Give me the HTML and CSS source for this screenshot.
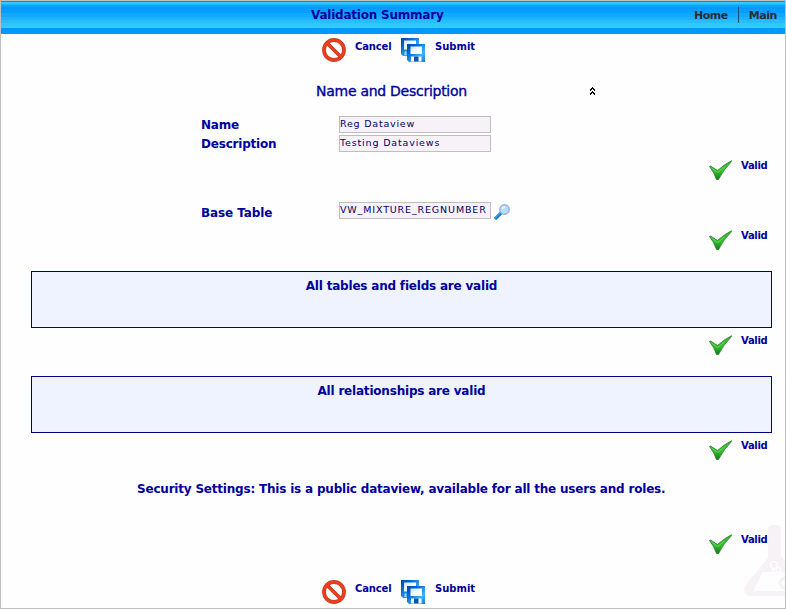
FILE: index.html
```
<!DOCTYPE html>
<html lang="en">
<head>
<meta charset="utf-8">
<title>Validation Summary</title>
<link rel="stylesheet" href="styles.css">
</head>
<body>
<svg width="0" height="0" class="defs" aria-hidden="true">
  <defs>
    <linearGradient id="disk" x1="0" y1="0" x2="1" y2="1"><stop offset="0" stop-color="#0a3fa4"/><stop offset=".35" stop-color="#0d6fd0"/><stop offset=".7" stop-color="#3fb4fa"/><stop offset="1" stop-color="#1478d0"/></linearGradient>
    <linearGradient id="label" x1="0" y1="0" x2="1" y2="1"><stop offset="0" stop-color="#c2e6ff"/><stop offset=".6" stop-color="#fff"/></linearGradient>
    <linearGradient id="green" x1="0" y1="0" x2="0" y2="1"><stop offset="0" stop-color="#3ab535"/><stop offset=".55" stop-color="#35c22f"/><stop offset="1" stop-color="#0d7d10"/></linearGradient>
    <symbol id="cancel" viewBox="0 0 24 24">
      <circle cx="12" cy="12" r="10" fill="#fff" stroke="#b5452f" stroke-width="3.8"/>
      <path d="M5.500 5.500 18.500 18.500" stroke="#b5452f" stroke-width="3.800"/>
      <circle cx="12" cy="12" r="10" fill="none" stroke="#f23c1a" stroke-width="2.400"/>
      <path d="M5 5 19 19" stroke="#f23c1a" stroke-width="2.400"/>
    </symbol>
    <symbol id="submit" viewBox="0 0 24 24">
      <path d="M0 0h18v18H2l-2-2z" fill="url(#disk)"/>
      <path d="M3 2.500h12v9H3z" fill="url(#label)"/>
      <path d="M3.500 13.500h2v3.500h-2z" fill="#9fd6fc"/>
      <path d="M6 6h18v18H8l-2-2z" fill="url(#disk)"/>
      <path d="M9.500 8.500h11.500v7.500H9.500z" fill="url(#label)"/>
      <path d="M10 18.500h10.500v5H10z" fill="#f4fbff"/>
      <path d="M13 18.500h4.500v5H13z" fill="#0757ae"/>
    </symbol>
    <symbol id="check" viewBox="0 0 24 24">
      <path d="M.5 7.500 1.500 7 8.500 11.500Q15 5.500 22.500 1.700L22 3.200Q14.500 10.500 9.500 20.500H7.500Q5 13 .5 7.500Z" fill="url(#green)" stroke="#176b18" stroke-width=".7"/>
      <path d="M2.500 9 8.700 13.500 16 7.500" fill="none" stroke="#79dc70" stroke-width=".7"/>
    </symbol>
  </defs>
</svg>
<div class="page">
  <header class="header">
    <h1>Validation Summary</h1>
    <nav><a>Home</a><i></i><a>Main</a></nav>
  </header>
  <div class="toolbar">
    <svg><use href="#cancel"/></svg><span class="cancel">Cancel</span>
    <svg><use href="#submit"/></svg><span class="submit">Submit</span>
  </div>
  <div class="heading">
    <h2>Name and Description</h2>
    <svg viewBox="0 0 5 8" shape-rendering="crispEdges"><path d="M2 0h1v1h1v1h1v2H4V3H3V2H2v1H1v1H0V2h1V1h1zM2 4h1v1h1v1h1v2H4V7H3V6H2v1H1v1H0V6h1V5h1z"/></svg>
  </div>
  <div class="field"><label>Name</label><span class="box t1">Reg Dataview</span></div>
  <div class="field"><label>Description</label><span class="box t2">Testing Dataviews</span></div>
  <div class="status s1"><svg><use href="#check"/></svg><span>Valid</span></div>
  <div class="field base"><label>Base Table</label><span class="box t3">VW_MIXTURE_REGNUMBER</span>
    <svg viewBox="0 0 16 16"><path d="M1 15 7 9" stroke="#1672c8" stroke-width="3.200"/><path d="M1 14 6 9" stroke="#38a7f0" stroke-width="1.400"/><circle cx="10.500" cy="5.500" r="4.700" fill="#b5e0fd" stroke="#9badd8" stroke-width="1.400"/><path d="M8 5Q9 3 11 3" fill="none" stroke="#f4fcff" stroke-width="1.300"/></svg>
  </div>
  <div class="status s2"><svg><use href="#check"/></svg><span>Valid</span></div>
  <div class="panel">All tables and fields are valid</div>
  <div class="status s3"><svg><use href="#check"/></svg><span>Valid</span></div>
  <div class="panel">All relationships are valid</div>
  <div class="status s3"><svg><use href="#check"/></svg><span>Valid</span></div>
  <p class="security">Security Settings: This is a public dataview, available for all the users and roles.</p>
  <div class="status s4"><svg><use href="#check"/></svg><span>Valid</span></div>
  <div class="toolbar bottom">
    <svg><use href="#cancel"/></svg><span class="cancel">Cancel</span>
    <svg><use href="#submit"/></svg><span class="submit">Submit</span>
  </div>
  <svg class="flask" viewBox="0 0 42 74"><path d="M25 5Q25 1 30 1H34Q38 1 38 5V31L42 38V48H20L11 65Q11 67 14 67H42V72H7Q-1 70 2 62L25 34Z" fill="#f6f2f6"/><g fill="none" stroke="#fff" stroke-width="1.200"><circle cx="31" cy="41" r="3.500"/><circle cx="35.500" cy="46" r="2.300"/><circle cx="30" cy="47" r="1.500"/></g><circle cx="42" cy="59" r="5" fill="none" stroke="#f6f2f6" stroke-width="3"/></svg>
</div>
</body>
</html>
```
FILE: styles.css
```
* { box-sizing: border-box; }
body { margin: 0; color: #00009c; font: bold 12px/16px "DejaVu Sans", Verdana, sans-serif; letter-spacing: -.2px; }
.defs { position: absolute; }
.page { position: relative; width: 786px; height: 609px; border: 1px solid #c0c0c0; background: #fefefe; overflow: hidden; white-space: nowrap; }
svg { display: block; flex: none; }
h1, h2, p { margin: 0; }
.header { height: 33px; display: grid; grid-template-columns: 310px 1fr auto; padding: 6px 8px 0 0;
  background: linear-gradient(#0a8fe8 0 1px, #33c5ff 1px 3px, #1fb2ff 3px 4px, #0fa3ff 4px 6px, #0099ff 6px 8px, #069eff 8px 12px, #12a8ff 12px 16px, #1eb3ff 16px 19px, #27bdff 19px 22px, #2fc7ff 22px 25px, #33ccff 25px 27px, #0099ff 27px); }
h1 { grid-column: 2; font-size: 12px; line-height: 16px; letter-spacing: -.22px; }
nav { display: flex; gap: 10px; color: #2b2b33; font-size: 11px; letter-spacing: -.45px; }
nav a { padding-top: 1px; }
nav i { width: 1px; height: 16px; background: #17466f; }
.toolbar { display: flex; height: 24px; margin: 4px 0 0 321px; font-size: 10px; line-height: 18px; letter-spacing: 0; }
.toolbar svg { width: 24px; height: 24px; }
.cancel { width: 46px; margin-left: 9px; letter-spacing: -.15px; }
.submit { margin-left: 10px; }
.heading { display: flex; height: 18px; margin: 21px 0 15px 315px; }
h2 { width: 274px; font-size: 14px; line-height: 17px; font-weight: normal; letter-spacing: -.27px; -webkit-text-stroke: .35px #00009c; }
.heading svg { width: 5px; height: 8px; margin-top: 4px; fill: #000; }
.field { display: grid; grid-template-columns: 138px 152px 16px; height: 19px; margin-left: 200px; }
.field label { line-height: 18px; }
.box { height: 17px; border: 1px solid #c0bcc2; background: #f7f2f7; color: #000066; font-size: 9.5px; line-height: 14px; font-weight: normal; }
.t1 { letter-spacing: .78px; }
.t2 { letter-spacing: .84px; }
.t3 { letter-spacing: .86px; }
.base { margin-top: 19px; }
.base label { padding-top: 2px; letter-spacing: -.1px; }
.base svg { width: 16px; height: 16px; margin: 2px 0 0 3px; }
.status { display: grid; grid-template-columns: 24px auto; column-gap: 8px; height: 24px; margin-left: 708px; font-size: 10px; line-height: 14px; letter-spacing: -.3px; }
.status svg { width: 24px; height: 24px; }
.s1 { margin-top: 5px; }
.s2 { margin-top: 8px; }
.panel { height: 57px; margin: 18px 13px 0 30px; border: 1px solid #000080; background: #eef3ff; text-align: center; line-height: 28px; }
.s3 { margin-top: 6px; }
.security { height: 16px; margin: 18px 0 0 136px; }
.s4 { margin-top: 36px; }
.bottom { margin-top: 23px; }
.flask { position: absolute; right: 0; bottom: 10px; width: 42px; height: 74px; }
```
